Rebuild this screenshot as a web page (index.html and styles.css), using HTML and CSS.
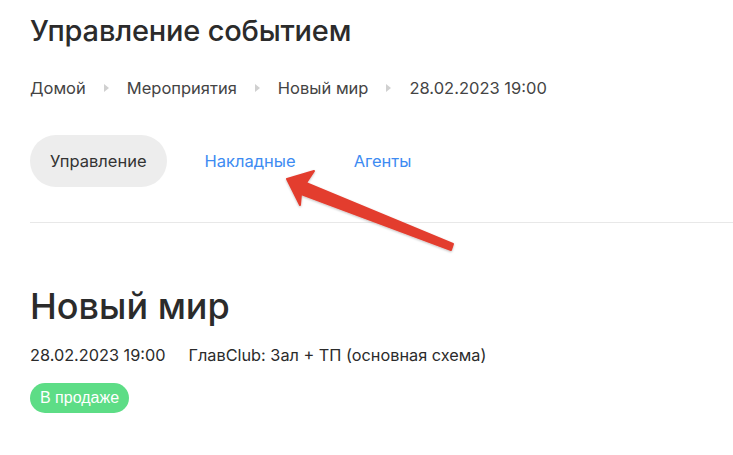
FILE: index.html
```html
<!DOCTYPE html>
<html lang="ru">
<head>
  <meta charset="UTF-8" />
  <title>Управление событием</title>
  <link rel="stylesheet" href="styles.css">
</head>
<body>
  <div class="page">
    <h1 class="title">Управление событием</h1>

    <nav class="crumbs">
      <a href="#">Домой</a>
      <span class="sep"></span>
      <a href="#">Мероприятия</a>
      <span class="sep"></span>
      <a href="#">Новый мир</a>
      <span class="sep"></span>
      <span>28.02.2023 19:00</span>
    </nav>

    <div class="tabs">
      <span class="tab active">Управление</span>
      <a class="tab" href="#">Накладные</a>
      <a class="tab" href="#">Агенты</a>
    </div>

    <hr class="divider">

    <div class="event">
      <h2 class="event-name">Новый мир</h2>
      <div class="event-meta">
        <span>28.02.2023 19:00</span>
        <span>ГлавClub: Зал + ТП (основная схема)</span>
      </div>
      <span class="badge">В продаже</span>
    </div>
  </div>

  <svg class="pointer" width="733" height="455" viewBox="0 0 733 455">
    <defs>
      <filter id="shadow" x="-10%" y="-10%" width="120%" height="130%">
        <feDropShadow dx="0" dy="1" stdDeviation="1" flood-color="#000" flood-opacity="0.25"/>
      </filter>
    </defs>
    <polygon points="287,179 314,171 306,183 453,244 451,250 301,194 300,205"
      fill="#e33d2f" stroke="#e33d2f" stroke-width="2" stroke-linejoin="round" filter="url(#shadow)"/>
  </svg>
</body>
</html>
```

FILE: styles.css
```css
body {
  margin: 0;
  font-family: Inter, "Noto Sans", sans-serif;
  color: #2b2b2b;
  background: #fff;
}

.page {
  padding: 13px 0 0 30px;
}

.title {
  margin: 0;
  font-size: 29px;
  line-height: 36px;
  font-weight: 500;
  letter-spacing: -0.2px;
}

.crumbs {
  display: flex;
  align-items: center;
  gap: 18px;
  margin-top: 27px;
  font-size: 16.5px;
  line-height: 24px;
  color: #444;
}

.crumbs a {
  color: inherit;
  text-decoration: none;
}

.sep {
  width: 0;
  height: 0;
  border-top: 4px solid transparent;
  border-bottom: 4px solid transparent;
  border-left: 5px solid #d0d0d0;
}

.tabs {
  display: flex;
  align-items: center;
  gap: 18px;
  margin-top: 35px;
}

.tab {
  padding: 14px 20px;
  border-radius: 26px;
  font-size: 16.5px;
  line-height: 24px;
  color: #3d8bf2;
  text-decoration: none;
}

.tab.active {
  background: #ededed;
  color: #333;
}

.divider {
  margin: 35px 0 0;
  border: none;
  border-top: 1px solid #e8e8e8;
}

.event {
  padding-top: 60px;
}

.event-name {
  margin: 0;
  font-size: 36px;
  line-height: 46px;
  font-weight: 500;
}

.event-meta {
  display: flex;
  gap: 23px;
  margin-top: 14px;
  font-size: 16.3px;
  line-height: 24px;
}

.badge {
  display: inline-block;
  margin-top: 16px;
  padding: 3px 10px;
  border-radius: 15px;
  background: #5ddd86;
  color: #fff;
  font-family: "Liberation Sans", Arial, sans-serif;
  font-size: 16px;
  line-height: 24px;
}

.pointer {
  position: absolute;
  left: 0;
  top: 0;
  pointer-events: none;
}
```
